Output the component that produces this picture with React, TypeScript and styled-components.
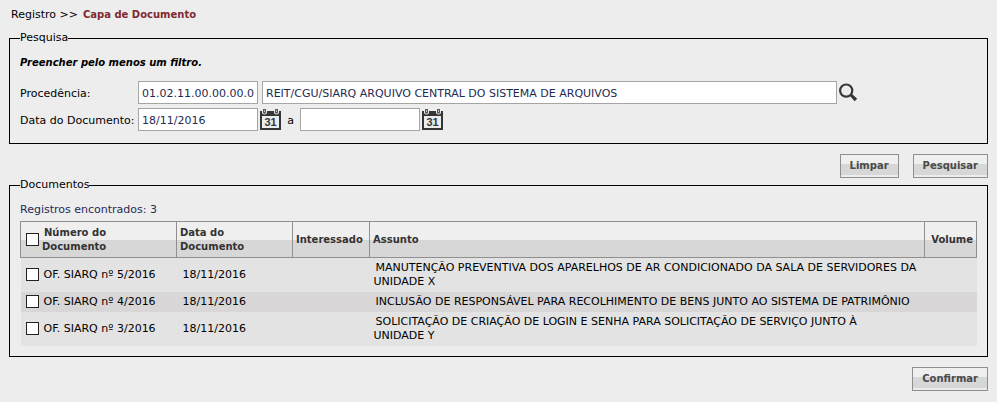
import React, { useState } from "react";
import styled, { createGlobalStyle } from "styled-components";

const GlobalStyle = createGlobalStyle`
  *, *::before, *::after { box-sizing: border-box; }
  body {
    margin: 0;
    background: #ededed;
    color: #000;
    font: 11px/14px Verdana, "DejaVu Sans", sans-serif;
  }
`;

const Page = styled.main`
  padding: 8px 9px;
`;

const Breadcrumb = styled.nav`
  display: flex;
  gap: 5px;
  padding: 0 2px;
  margin-bottom: 9px;
`;

const Current = styled.strong`
  color: #7f2a30;
  font-size: 10px;
`;

const Panel = styled.fieldset`
  min-width: 0;
  margin: 0;
  padding: 11px 10px 10px;
  border: 1px solid #000;
`;

const SearchPanel = styled(Panel)`
  padding-bottom: 12px;
`;

const Legend = styled.legend`
  padding: 0;
`;

const Hint = styled.p`
  margin: 0 0 11px;
  font-size: 10px;
  font-weight: bold;
  font-style: italic;
`;

const Form = styled.div`
  display: grid;
  grid-template-columns: 118px 1fr;
  row-gap: 4px;
  align-items: center;
`;

const FieldLabel = styled.label`
  padding-top: 2px;
`;

const Fields = styled.div`
  display: flex;
  align-items: center;
  gap: 4px;
`;

const DateField = styled.div`
  display: flex;
  align-items: center;
  gap: 2px;
`;

const Separator = styled.span`
  width: 11px;
  padding-top: 2px;
  text-align: center;
`;

const TextInput = styled.input<{ $wide?: boolean }>`
  flex: ${(p) => (p.$wide ? "0 1 575px" : "0 0 120px")};
  width: ${(p) => (p.$wide ? "575px" : "120px")};
  min-width: 0;
  height: 23px;
  padding: 2px 3px 0;
  border: 1px solid #a5a5a5;
  border-radius: 0;
  background: #fff;
  color: #1f2b55;
  font: inherit;
`;

const IconButton = styled.button`
  display: flex;
  flex: none;
  padding: 0;
  border: 0;
  background: none;
  cursor: pointer;
`;

const SearchField = styled.div`
  display: flex;
  flex: 0 1 597px;
  min-width: 0;
  align-items: center;
  gap: 2px;
`;

const Actions = styled.div`
  display: flex;
  justify-content: flex-end;
  gap: 14px;
  padding: 10px 0 0;
`;

const Button = styled.button`
  height: 24px;
  padding: 0 9px;
  border: 1px solid #8f8f8f;
  border-radius: 0;
  background: linear-gradient(#efefef 0 42%, #d7d7d7 42% 90%, #ececec 90%);
  color: #4a4a4a;
  font: inherit;
  font-size: 10px;
  font-weight: bold;
  cursor: pointer;
`;

const Count = styled.p`
  margin: 0 0 4px;
  color: #1f2b55;
`;

const Table = styled.table`
  width: 100%;
  table-layout: fixed;
  border-collapse: collapse;
`;

const Column = styled.col<{ $width?: number }>`
  width: ${(p) => (p.$width ? `${p.$width}px` : "auto")};
`;

const HeadRow = styled.tr`
  height: 36px;
  background: linear-gradient(#efefef 50%, #d7d7d7 50%);
`;

const HeadCell = styled.th<{ $end?: boolean }>`
  padding: 3px;
  border: 1px solid #8f8f8f;
  color: #333;
  font-size: 10px;
  text-align: ${(p) => (p.$end ? "right" : "left")};
`;

const Row = styled.tr`
  background: #e3e3e3;
  &:nth-child(even) { background: #d8d6d6; }
`;

const Cell = styled.td`
  padding: 3px 4px;
  text-indent: 2px;
`;

const CheckCell = styled(Cell)`
  padding: 3px;
`;

const CheckLabel = styled.label`
  display: flex;
  align-items: center;
  gap: 3px;
`;

const CheckText = styled.span`
  text-indent: 2px;
`;

const Checkbox = styled.input`
  appearance: none;
  flex: none;
  width: 13px;
  height: 13px;
  margin: 0 0 1px 2px;
  border: 1px solid #222;
  background: #fff;
  &:checked { background: #333; box-shadow: inset 0 0 0 2px #fff; }
`;

const CalendarIcon = () => (
  <svg width="21" height="21" viewBox="0 0 21 21" aria-hidden="true">
    <path d="M0 2h21v19H0z" fill="#343638" />
    <path d="M2 7h17v12H2z" fill="#ededed" />
    <path d="M2 0h5v3a2.500 2.500 0 0 1-5 0zM14 0h5v3a2.500 2.500 0 0 1-5 0z" fill="#ededed" />
    <path d="M3 0h3v3.200a1.500 1.500 0 0 1-3 0zM15 0h3v3.200a1.500 1.500 0 0 1-3 0z" fill="#55585a" />
    <path d="M4 1h1v2H4zM16 1h1v2h-1z" fill="#bdbdbd" />
    <text x="10.500" y="17" textAnchor="middle" fontFamily="Liberation Sans, Arial, sans-serif" fontSize="11" fontWeight="bold" fill="#343638">31</text>
  </svg>
);

const SearchIcon = () => (
  <svg width="20" height="20" viewBox="0 0 20 20" aria-hidden="true">
    <circle cx="7.200" cy="7.600" r="6.100" fill="none" stroke="#343638" strokeWidth="2.200" />
    <path d="M10.500 12.500l2-2 5.700 5.200-2.500 2.500z" fill="#343638" />
  </svg>
);

const documents = [
  { id: 5, date: "18/11/2016", subject: "MANUTENÇÃO PREVENTIVA DOS APARELHOS DE AR CONDICIONADO DA SALA DE SERVIDORES DA UNIDADE\u00a0X" },
  { id: 4, date: "18/11/2016", subject: "INCLUSÃO DE RESPONSÁVEL PARA RECOLHIMENTO DE BENS JUNTO AO SISTEMA DE PATRIMÔNIO" },
  { id: 3, date: "18/11/2016", subject: "SOLICITAÇÃO DE CRIAÇÃO DE LOGIN E SENHA PARA SOLICITAÇÃO DE SERVIÇO JUNTO À UNIDADE\u00a0Y" },
];

export default function App() {
  const [selected, setSelected] = useState<number[]>([]);
  const allSelected = selected.length === documents.length;
  const toggle = (id: number) =>
    setSelected((ids) => (ids.includes(id) ? ids.filter((i) => i !== id) : [...ids, id]));

  return (
    <>
      <GlobalStyle />
      <Page>
        <Breadcrumb>
          <span>Registro &gt;&gt;</span>
          <Current>Capa de Documento</Current>
        </Breadcrumb>

        <SearchPanel>
          <Legend>Pesquisa</Legend>
          <Hint>Preencher pelo menos um filtro.</Hint>
          <Form>
            <FieldLabel htmlFor="origin">Procedência:</FieldLabel>
            <Fields>
              <TextInput id="origin" defaultValue="01.02.11.00.00.00.00" />
              <SearchField>
                <TextInput $wide aria-label="Nome da procedência" defaultValue="REIT/CGU/SIARQ ARQUIVO CENTRAL DO SISTEMA DE ARQUIVOS" />
                <IconButton type="button" aria-label="Buscar procedência"><SearchIcon /></IconButton>
              </SearchField>
            </Fields>
            <FieldLabel htmlFor="from">Data do Documento:</FieldLabel>
            <Fields>
              <DateField>
                <TextInput id="from" defaultValue="18/11/2016" />
                <IconButton type="button" aria-label="Data inicial"><CalendarIcon /></IconButton>
              </DateField>
              <Separator>a</Separator>
              <DateField>
                <TextInput aria-label="Data final" />
                <IconButton type="button" aria-label="Escolher data final"><CalendarIcon /></IconButton>
              </DateField>
            </Fields>
          </Form>
        </SearchPanel>

        <Actions>
          <Button type="button">Limpar</Button>
          <Button type="button">Pesquisar</Button>
        </Actions>

        <Panel>
          <Legend>Documentos</Legend>
          <Count>Registros encontrados: 3</Count>
          <Table>
            <colgroup>
              <Column $width={156} />
              <Column $width={116} />
              <Column $width={77} />
              <Column />
              <Column $width={52} />
            </colgroup>
            <thead>
              <HeadRow>
                <HeadCell>
                  <CheckLabel>
                    <Checkbox
                      type="checkbox"
                      checked={allSelected}
                      onChange={() => setSelected(allSelected ? [] : documents.map((d) => d.id))}
                    />
                    <CheckText>Número do<br />Documento</CheckText>
                  </CheckLabel>
                </HeadCell>
                <HeadCell>Data do<br />Documento</HeadCell>
                <HeadCell>Interessado</HeadCell>
                <HeadCell>Assunto</HeadCell>
                <HeadCell $end>Volume</HeadCell>
              </HeadRow>
            </thead>
            <tbody>
              {documents.map((d) => (
                <Row key={d.id}>
                  <CheckCell>
                    <CheckLabel>
                      <Checkbox type="checkbox" checked={selected.includes(d.id)} onChange={() => toggle(d.id)} />
                      <CheckText>OF. SIARQ nº {d.id}/2016</CheckText>
                    </CheckLabel>
                  </CheckCell>
                  <Cell>{d.date}</Cell>
                  <Cell />
                  <Cell>{d.subject}</Cell>
                  <Cell />
                </Row>
              ))}
            </tbody>
          </Table>
        </Panel>

        <Actions>
          <Button type="button">Confirmar</Button>
        </Actions>
      </Page>
    </>
  );
}
